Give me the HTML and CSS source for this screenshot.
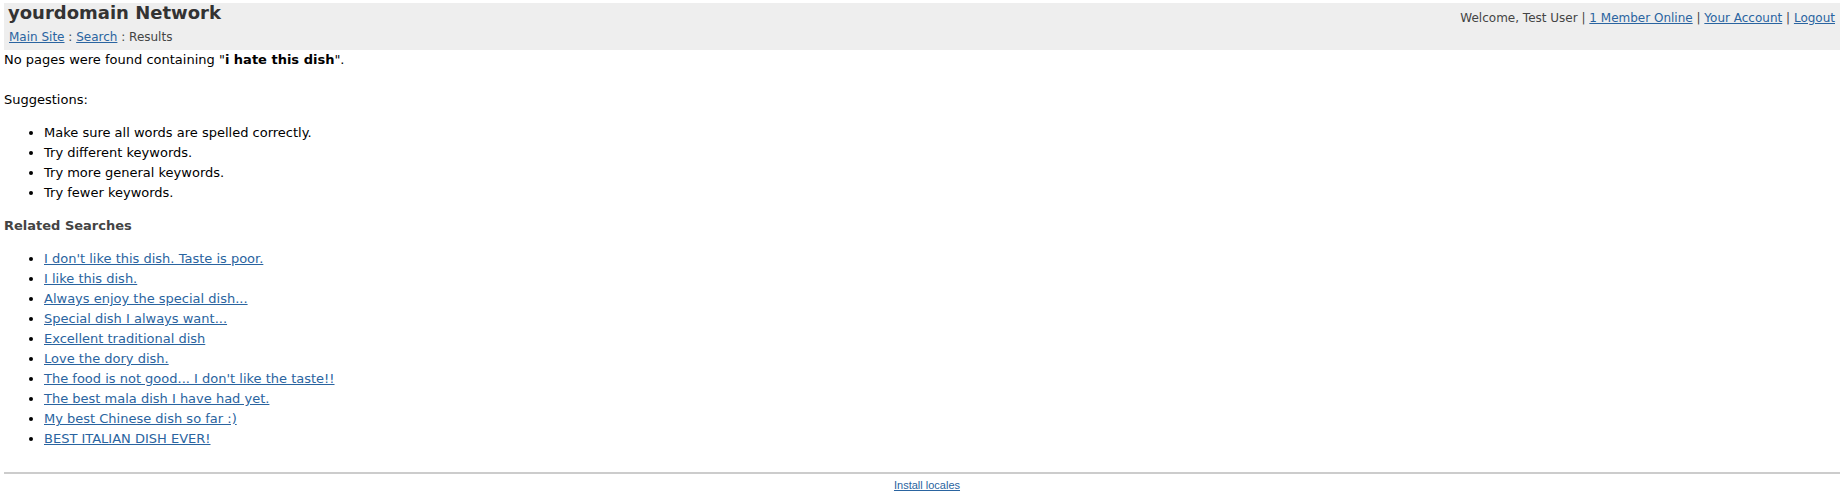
FILE: index.html
```html
<!DOCTYPE html>
<html>
<head>
<meta charset="utf-8">
<title>Search Results</title>
<link rel="stylesheet" href="styles.css">
</head>
<body>
<div class="header">
  <div class="header-left">
    <div class="site-title">yourdomain Network</div>
    <div class="crumbs"><a href="#">Main Site</a> : <a href="#">Search</a> : Results</div>
  </div>
  <div class="header-right">Welcome, Test User | <a href="#">1 Member Online</a> | <a href="#">Your Account</a> | <a href="#">Logout</a></div>
</div>
<div class="content">
  <div class="msg">No pages were found containing "<b>i hate this dish</b>".</div>
  <div class="msg blank">&nbsp;</div>
  <div class="msg">Suggestions:</div>
  <ul class="list">
    <li>Make sure all words are spelled correctly.</li>
    <li>Try different keywords.</li>
    <li>Try more general keywords.</li>
    <li>Try fewer keywords.</li>
  </ul>
  <h4 class="related-title">Related Searches</h4>
  <ul class="list related">
    <li><a href="#">I don't like this dish. Taste is poor.</a></li>
    <li><a href="#">I like this dish.</a></li>
    <li><a href="#">Always enjoy the special dish...</a></li>
    <li><a href="#">Special dish I always want...</a></li>
    <li><a href="#">Excellent traditional dish</a></li>
    <li><a href="#">Love the dory dish.</a></li>
    <li><a href="#">The food is not good... I don't like the taste!!</a></li>
    <li><a href="#">The best mala dish I have had yet.</a></li>
    <li><a href="#">My best Chinese dish so far :)</a></li>
    <li><a href="#">BEST ITALIAN DISH EVER!</a></li>
  </ul>
</div>
<div class="footer">
  <a href="#">Install locales</a>
</div>
</body>
</html>
```
FILE: styles.css
```css
html, body {
  margin: 0;
  padding: 0;
  background: #fff;
}
body {
  font-family: "DejaVu Sans", sans-serif;
  font-size: 13px;
  line-height: 20px;
  color: #000;
  padding-left: 4px;
}
a {
  color: #2a64a0;
  text-decoration: underline;
}
.header {
  margin-top: 3px;
  background: #eeeeee;
  height: 47px;
  display: flex;
  justify-content: space-between;
  align-items: flex-start;
}
.header-left {
  padding-left: 4px;
}
.site-title {
  font-size: 18px;
  font-weight: bold;
  color: #333;
  line-height: 20px;
}
.crumbs {
  margin-top: 4px;
  padding-left: 1px;
  font-size: 12px;
  color: #444;
  line-height: 20px;
}
.header-right {
  padding-top: 5px;
  padding-right: 5px;
  font-size: 12px;
  color: #444;
}
.content {
  padding-top: 0;
}
.list {
  margin: 13px 0 0 0;
  padding-left: 40px;
}
.related-title {
  margin: 13px 0 0 0;
  font-size: 13px;
  line-height: 20px;
  color: #444;
}
.list.related {
  margin-top: 13px;
}
.footer {
  margin-top: 23px;
  border-top: 2px solid #cccccc;
  text-align: center;
  font-family: "Liberation Sans", Arial, sans-serif;
  font-size: 11px;
  line-height: 20px;
  padding-top: 1px;
  padding-left: 10px;
}
```
